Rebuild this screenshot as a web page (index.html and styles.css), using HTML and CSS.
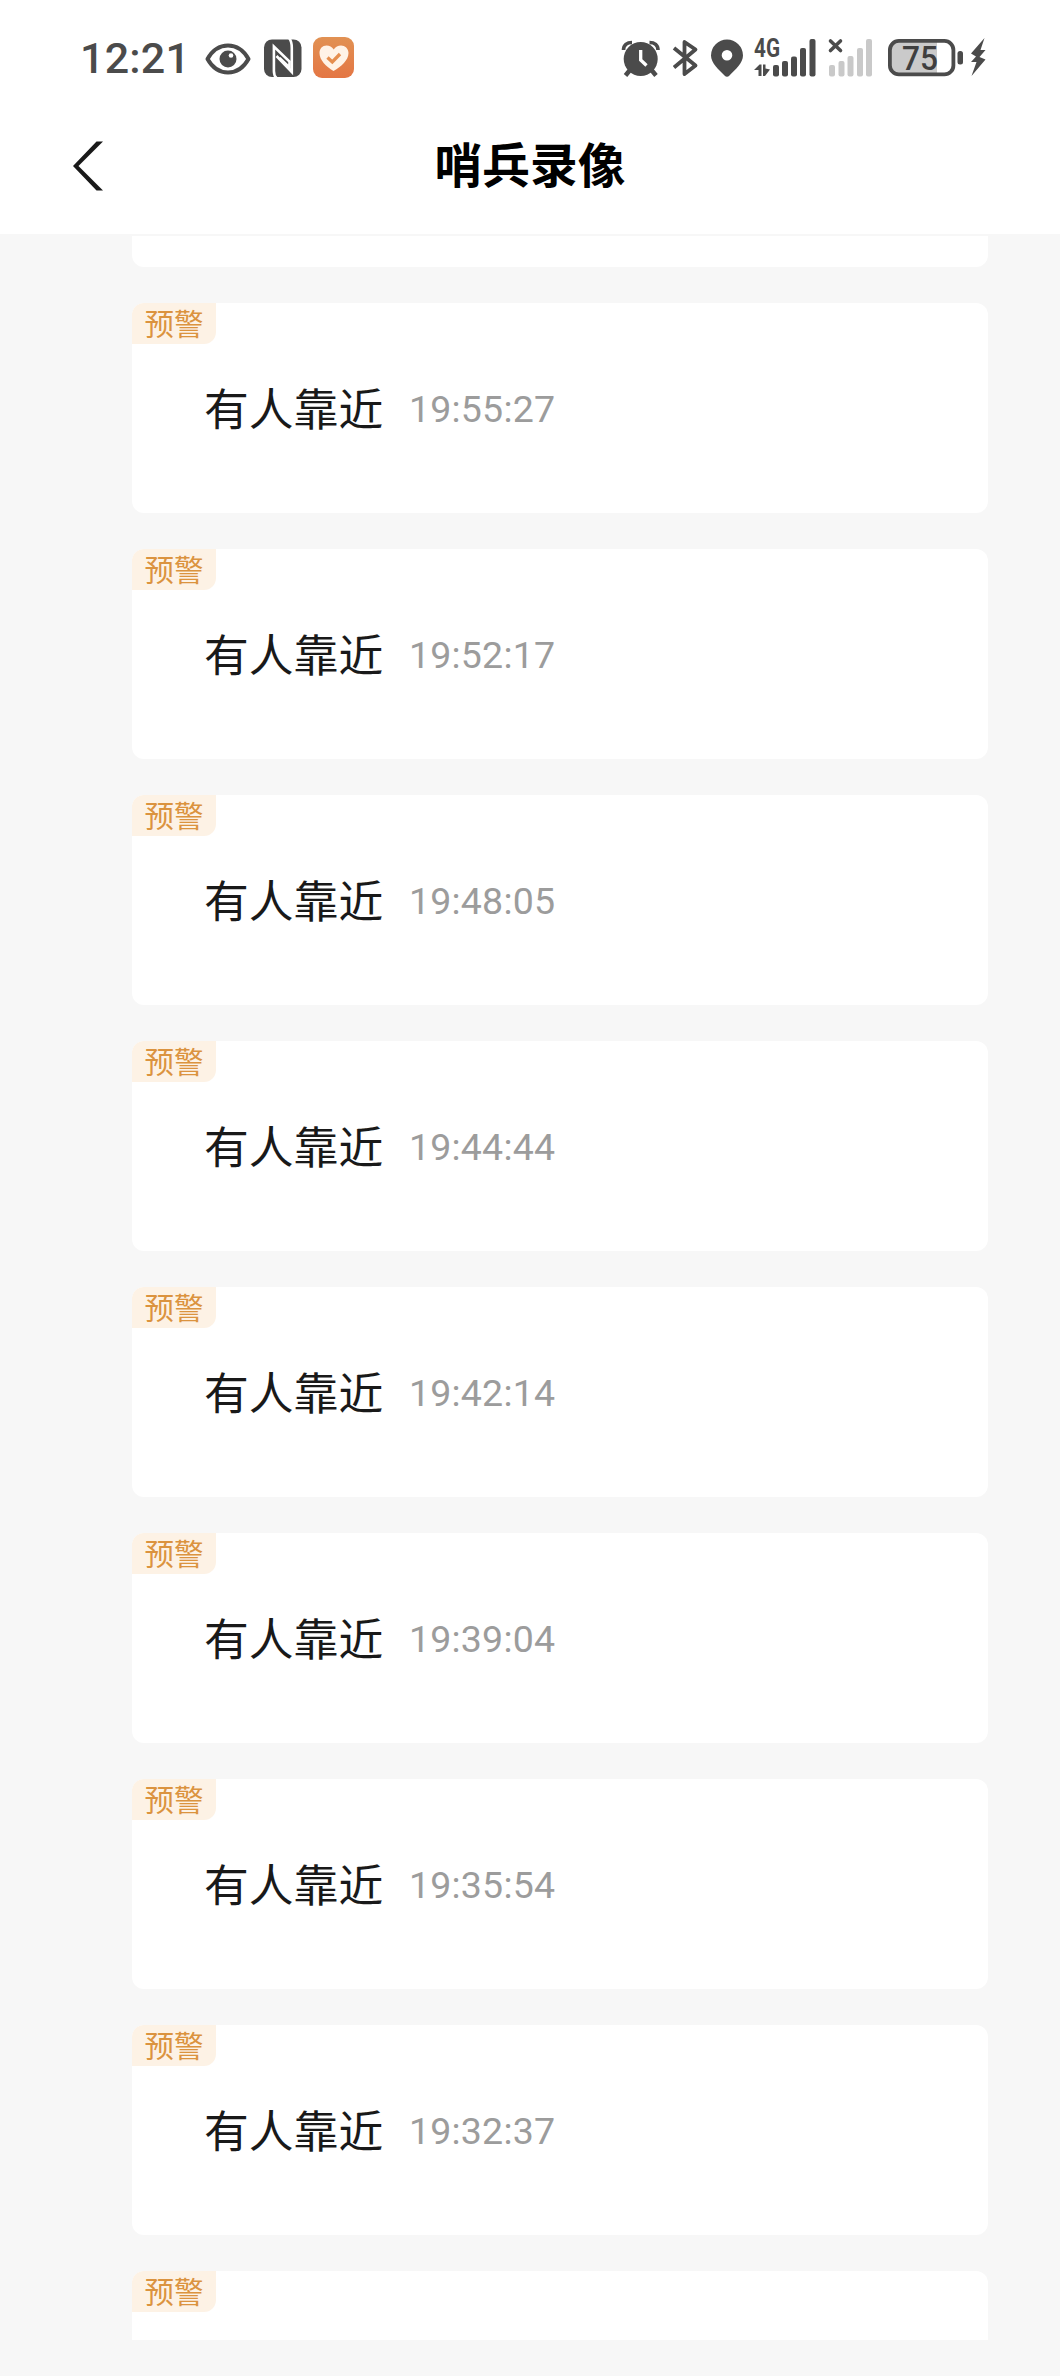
FILE: index.html
```html
<!DOCTYPE html>
<html lang="zh-CN">
<head>
<meta charset="utf-8">
<title>哨兵录像</title>
<link rel="stylesheet" href="styles.css">
</head>
<body>
<div class="screen">
  <header class="top">
    <div class="status">
      <div class="status-left">
        <span class="clock">12:21</span>
        <svg class="eye" width="46" height="40" viewBox="0 0 46 40"><path d="M2.500 21C7 13 14.500 7.500 23 7.500S39 13 43.500 21C39 29 31.500 34.500 23 34.500S7 29 2.500 21Z" fill="none" stroke="#4b4b4b" stroke-width="4" stroke-linejoin="round"/><circle cx="23" cy="21" r="8.500" fill="#4b4b4b"/><circle cx="26" cy="17.500" r="2.300" fill="#fff"/></svg>
        <svg class="nfc" width="38" height="40" viewBox="0 0 38 40"><rect x="0" y="1.500" width="37.500" height="37.500" rx="8" fill="#4b4b4b"/><path d="M12.500 40C10.200 38 9.900 36 9.900 33V8.500L25.500 23.500V29.500L15.500 20" fill="none" stroke="#fff" stroke-width="2.600"/><path d="M25.300 .5C27.500 3 27.800 6 27.800 10V34L12.500 18" fill="none" stroke="#fff" stroke-width="2.600"/></svg>
        <svg class="care" width="42" height="42" viewBox="0 0 42 42"><defs><linearGradient id="orange" x1="0" y1="0" x2="0" y2="1"><stop offset="0" stop-color="#e19153"/><stop offset="1" stop-color="#e47644"/></linearGradient></defs><rect width="41" height="41" rx="9" fill="url(#orange)"/><path d="M20.500 34C13 29.500 6.500 23 6.500 16C6.500 11.500 9.500 8.500 13.500 8.500C16.500 8.500 19 10 20.700 12.500C22.500 10 25 8.500 28 8.500C32 8.500 35.500 11.500 35.500 16C35.500 23 28.500 29.500 20.500 34Z" fill="#fff3e7"/><path d="M14.500 20.500L19.300 25L27 17" fill="none" stroke="#e58e4f" stroke-width="3.300"/></svg>
      </div>
      <div class="status-right">
        <svg class="alarm" width="38" height="40" viewBox="0 0 38 40"><circle cx="18.700" cy="21" r="17" fill="#4b4b4b"/><path d="M8 32L3.500 37.500M29.500 32L34 37.500" stroke="#4b4b4b" stroke-width="4.500"/><path d="M1.500 12C1.500 7 5 4.500 10 4.500M36 12C36 7 32.500 4.500 27.500 4.500" fill="none" stroke="#4b4b4b" stroke-width="3.600"/><path d="M18.700 12V22L24.500 27.500" fill="none" stroke="#fff" stroke-width="3.300"/></svg>
        <svg class="bt" width="26" height="40" viewBox="0 0 26 40"><path d="M1 10L22.500 27.500L11.500 36V4L22.500 11.500L1 29.500" fill="none" stroke="#4b4b4b" stroke-width="3.800" stroke-linejoin="round"/></svg>
        <svg class="pin" width="32" height="40" viewBox="0 0 32 40"><path fill-rule="evenodd" d="M16 1.500A16 16 0 0 1 32 17.500C32 25 24 32 18.500 37.500Q16 40 13.500 37.500C8 32 0 25 0 17.500A16 16 0 0 1 16 1.500ZM16 12A5.300 5.300 0 1 0 16 22.600A5.300 5.300 0 1 0 16 12Z" fill="#4b4b4b"/></svg>
        <svg class="signal" width="62" height="40" viewBox="0 0 62 40"><g fill="#4b4b4b"><text class="network" x="0" y="18.800" textLength="26" lengthAdjust="spacingAndGlyphs">4G</text><rect x="19" y="27" width="6" height="11.500" rx="2"/><rect x="28" y="23" width="6" height="15.500" rx="2"/><rect x="37" y="18.500" width="6" height="20" rx="2"/><rect x="46" y="10" width="6" height="28.500" rx="2"/><rect x="55.500" y="1" width="6" height="37.500" rx="2"/><path d="M0 32L5.500 26.500H7.500V38H4.500V32ZM9 26.500H11.500V30.500L16 31.500L11 38H9Z"/></g></svg>
        <svg class="nosim" width="44" height="40" viewBox="0 0 44 40"><g fill="#c9c9c9"><rect x="0" y="27" width="6" height="11.500" rx="2"/><rect x="9.500" y="23" width="6" height="15.500" rx="2"/><rect x="18.500" y="18" width="6" height="20.500" rx="2"/><rect x="28" y="10" width="6" height="28.500" rx="2"/><rect x="37" y="1" width="6" height="37.500" rx="2"/></g><path d="M1.500 3L11.500 12.500M11.500 3L1.500 12.500" stroke="#4b4b4b" stroke-width="3.600" stroke-linecap="round"/></svg>
        <svg class="battery" width="98" height="40" viewBox="0 0 98 40"><path d="M10 3H49V36H10Q2 36 2 28V11Q2 3 10 3Z" fill="#cacaca"/><rect x="1.900" y="2.900" width="63.500" height="33.500" rx="9" fill="none" stroke="#4b4b4b" stroke-width="3.800"/><rect x="69.500" y="13" width="5.500" height="13.500" rx="2.500" fill="#4b4b4b"/><text class="charge" x="14" y="31.500" textLength="36" lengthAdjust="spacingAndGlyphs">75</text><path d="M96.500 0L83 15.500L88 18.500L83 24H88.500L83.500 38L97.500 21.500L91.500 19L97.500 12H92.500Z" fill="#4b4b4b"/></svg>
      </div>
    </div>
    <nav class="nav">
      <svg class="back" width="34" height="50" viewBox="0 0 34 50"><path d="M27.500 .5H34L9.500 25L34 49.500H27.500L4 25Z" fill="#191919"/></svg>
      <h1 class="title">哨兵录像</h1>
    </nav>
  </header>
  <main class="list">
    <article class="card card-first"></article>
    <article class="card"><span class="tag">预警</span><div class="event"><span class="name">有人靠近</span><time class="time">19:55:27</time></div></article>
    <article class="card"><span class="tag">预警</span><div class="event"><span class="name">有人靠近</span><time class="time">19:52:17</time></div></article>
    <article class="card"><span class="tag">预警</span><div class="event"><span class="name">有人靠近</span><time class="time">19:48:05</time></div></article>
    <article class="card"><span class="tag">预警</span><div class="event"><span class="name">有人靠近</span><time class="time">19:44:44</time></div></article>
    <article class="card"><span class="tag">预警</span><div class="event"><span class="name">有人靠近</span><time class="time">19:42:14</time></div></article>
    <article class="card"><span class="tag">预警</span><div class="event"><span class="name">有人靠近</span><time class="time">19:39:04</time></div></article>
    <article class="card"><span class="tag">预警</span><div class="event"><span class="name">有人靠近</span><time class="time">19:35:54</time></div></article>
    <article class="card"><span class="tag">预警</span><div class="event"><span class="name">有人靠近</span><time class="time">19:32:37</time></div></article>
    <article class="card card-last"><span class="tag">预警</span></article>
  </main>
</div>
</body>
</html>
```
FILE: styles.css
```css
* { box-sizing: border-box; }
body {
  margin: 0;
  background: #f7f7f7;
  font-family: "Noto Sans CJK SC", sans-serif;
}
svg { display: block; flex: none; overflow: visible; }
.screen {
  width: 1060px;
  height: 2376px;
  background: #f7f7f7;
}
.top { height: 234px; background: #fff; }
.status {
  display: flex;
  justify-content: space-between;
  height: 98px;
  padding: 38px 74px 0 80px;
}
.status-left, .status-right { display: flex; align-items: flex-start; }
.clock {
  width: 125px;
  font: 500 43px/40px Roboto, sans-serif;
  letter-spacing: 0.2px;
  color: #4b4b4b;
  white-space: nowrap;
}
.nfc { margin-left: 13px; }
.care { margin: -1px 0 0 11px; }
.bt { margin-left: 13px; }
.pin { margin-left: 12px; }
.signal { margin-left: 11px; }
.nosim { margin-left: 13px; }
.battery { margin-left: 15px; }
.network { font: 700 25px Roboto, sans-serif; }
.charge { font: 500 34px Roboto, sans-serif; fill: #3f3f3f; }
.nav {
  display: grid;
  grid-template-columns: 108px 1fr 108px;
  align-items: center;
  height: 136px;
}
.back { margin: 0 0 0 69px; }
.title {
  margin: 0;
  padding-bottom: 6px;
  text-align: center;
  font-size: 47.7px;
  line-height: 72px;
  font-weight: 700;
  color: #000;
}
.list {
  display: flex;
  flex-direction: column;
  gap: 36px;
  padding: 2px 72px 36px 132px;
}
.card {
  flex: none;
  height: 210px;
  border-radius: 12px;
  background: #fff;
}
.card-first { height: 31px; border-radius: 0 0 12px 12px; }
.card-last { height: 69px; border-radius: 12px 12px 0 0; }
.tag {
  display: block;
  width: 84px;
  height: 41px;
  border-radius: 12px 0 12px 0;
  background: #fdf2e5;
  color: #db933f;
  font-size: 29.500px;
  line-height: 38px;
  text-align: center;
}
.event {
  display: flex;
  align-items: flex-start;
  height: 66px;
  margin-top: 30px;
  padding-left: 72px;
}
.name {
  width: 205px;
  font-size: 44.8px;
  line-height: 66px;
  color: #191919;
}
.time {
  padding-top: 2px;
  font: 400 37.5px/66px Roboto, sans-serif;
  letter-spacing: 0.2px;
  color: #9c9c9c;
}
```
